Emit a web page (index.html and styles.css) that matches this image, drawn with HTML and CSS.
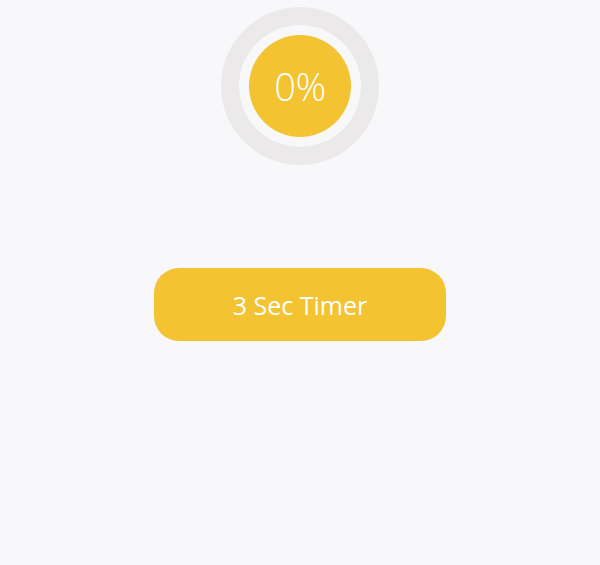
FILE: index.html
```html
<!DOCTYPE html>
<html>
<head>
<meta charset="utf-8">
<link rel="stylesheet" href="styles.css">
</head>
<body>
<main class="screen">
  <div class="ring">
    <div class="gap">
      <div class="core">0%</div>
    </div>
  </div>
  <button class="timer">3 Sec Timer</button>
</main>
</body>
</html>
```

FILE: styles.css
```css
html, body {
  margin: 0;
  padding: 0;
  background: #f8f7f9;
}
.screen {
  width: 600px;
  height: 565px;
  display: flex;
  flex-direction: column;
  align-items: center;
  padding-top: 7px;
  box-sizing: border-box;
  font-family: "Open Sans", "DejaVu Sans", sans-serif;
}
.ring {
  width: 158px;
  height: 158px;
  border-radius: 50%;
  background: #ebe9ea;
  display: flex;
  align-items: center;
  justify-content: center;
}
.gap {
  width: 122px;
  height: 122px;
  border-radius: 50%;
  background: #f8f7f9;
  display: flex;
  align-items: center;
  justify-content: center;
}
.core {
  width: 102px;
  height: 102px;
  border-radius: 50%;
  background: #f4c331;
  color: #fff;
  font-size: 38px;
  font-weight: 300;
  display: flex;
  align-items: center;
  justify-content: center;
  letter-spacing: -0.5px;
}
.timer {
  margin-top: 103px;
  width: 292px;
  height: 73px;
  border: none;
  border-radius: 25px;
  background: #f4c331;
  color: #fff;
  font-family: "Open Sans", "DejaVu Sans", sans-serif;
  font-size: 25px;
  padding: 0;
}
```
